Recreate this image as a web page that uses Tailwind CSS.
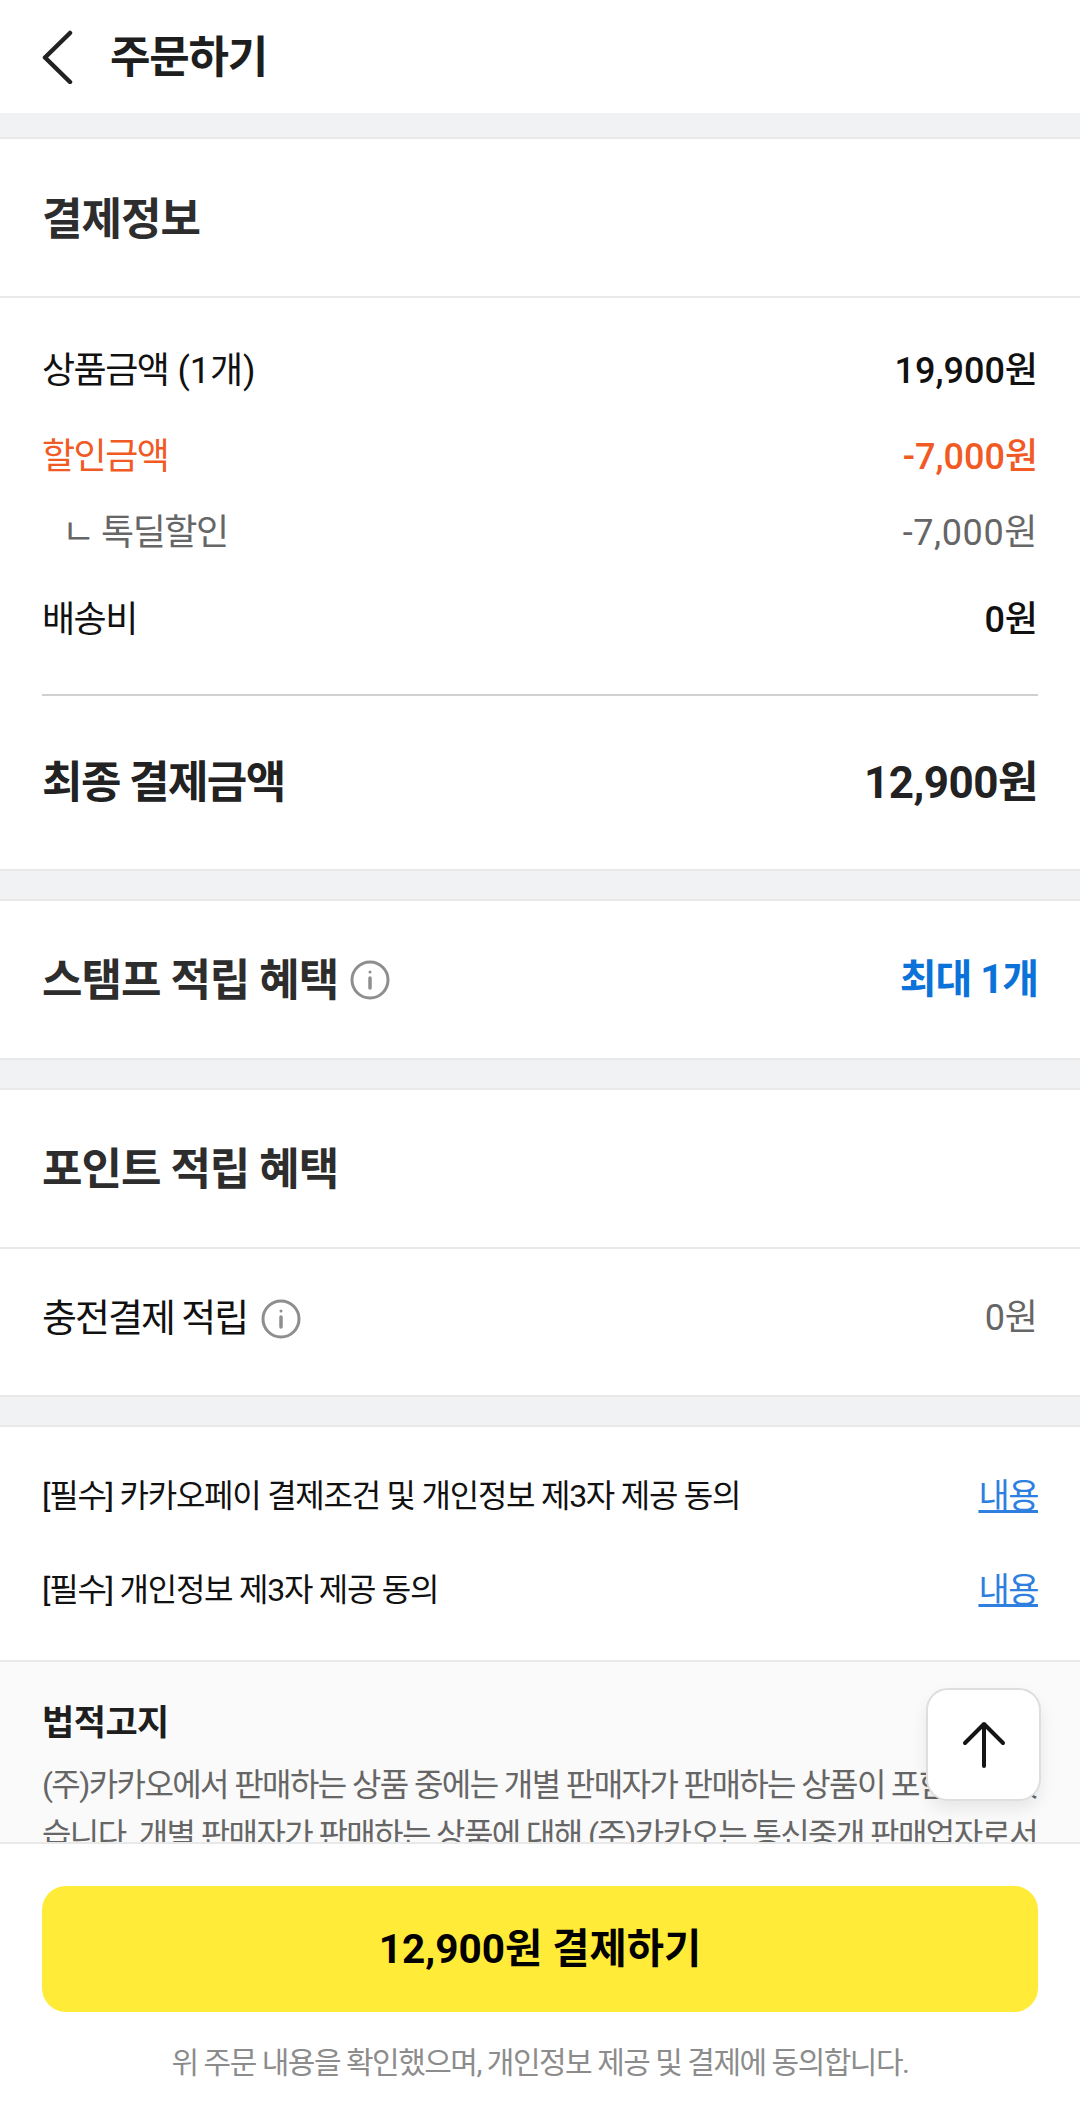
<!DOCTYPE html>
<html lang="ko">
<head>
  <meta charset="UTF-8" />
  <meta name="viewport" content="width=device-width, initial-scale=1.0"/>
  <title>주문하기</title>
  <script src="https://cdn.jsdelivr.net/npm/@tailwindcss/browser@4"></script>
</head>
<body class="font-['Roboto','Noto_Sans_CJK_KR',sans-serif] bg-white text-[#111]">
  <div class="relative flex flex-col h-[2117px] w-[1080px] overflow-hidden">

    <!-- Header -->
    <header class="flex items-center h-[113px] pl-[42px] shrink-0">
      <svg class="w-[32px] h-[54px]" viewBox="0 0 32 54" fill="none" stroke="#222" stroke-width="4.5" stroke-linecap="round" stroke-linejoin="round"><path d="M28 3 L3 27.5 L28 52"/></svg>
      <h1 class="ml-[36px] pt-[3px] text-[44px] tracking-[-1.2px] font-bold leading-none text-[#1e1e1e]">주문하기</h1>
    </header>

    <main class="flex-1 overflow-hidden bg-[#f1f2f4] border-t border-[#f1f2f4]">
      <div class="h-[23px]"></div>

      <!-- 결제정보 -->
      <section class="bg-white border-y-2 border-[#e9e9ea]">
        <div class="flex items-center h-[159px] px-[42px] border-b-2 border-[#e9e9ea]">
          <h2 class="pt-[4px] text-[44px] tracking-[-1px] font-bold leading-none text-[#2d2d2d]">결제정보</h2>
        </div>
        <div class="px-[42px] pt-[43px] text-[36px]">
          <div class="flex justify-between items-center h-[60px]"><span><span class="tracking-[-1.5px]">상품금액</span> (1개)</span><span class="font-medium">19,900원</span></div>
          <div class="flex justify-between items-center h-[60px] mt-[26px] text-[#f15a24]"><span class="tracking-[-1.5px]">할인금액</span><span class="font-medium">-7,000원</span></div>
          <div class="flex justify-between items-center h-[60px] mt-[16px] text-[#666]"><span class="pl-[20px] tracking-[-1.5px]">ㄴ 톡딜할인</span><span class="tracking-[0.6px]">-7,000원</span></div>
          <div class="flex justify-between items-center h-[60px] mt-[27px]"><span class="tracking-[-1.5px]">배송비</span><span class="font-medium">0원</span></div>
          <div class="h-[2px] bg-[#d0d0d2] mt-[44px]"></div>
          <div class="flex justify-between items-center h-[173px] text-[44px] font-bold text-[#222]"><span class="tracking-[-1.6px]">최종 결제금액</span><span class="tracking-[-0.5px]">12,900원</span></div>
        </div>
      </section>
      <div class="h-[28px]"></div>

      <!-- 스탬프 -->
      <section class="flex justify-between items-center h-[161px] px-[42px] bg-white border-y-2 border-[#e9e9ea]">
        <div class="flex items-center gap-[12px]">
          <h2 class="pt-[2px] text-[44px] tracking-[-1px] font-bold leading-none text-[#2d2d2d]">스탬프 적립 혜택</h2>
          <svg class="w-[40px] h-[40px]" viewBox="0 0 40 40" fill="none" stroke="#8e8e8e" stroke-width="3"><circle cx="20" cy="20" r="18"/><path d="M20 18v10" stroke-linecap="round" stroke-width="3.5"/><circle cx="20" cy="12" r="1.5" fill="#8e8e8e" stroke="none"/></svg>
        </div>
        <span class="text-[40px] tracking-[-1px] font-bold text-[#0a72d8]">최대 1개</span>
      </section>
      <div class="h-[28px]"></div>

      <!-- 포인트 -->
      <section class="bg-white border-y-2 border-[#e9e9ea]">
        <div class="flex items-center h-[159px] px-[42px] border-b-2 border-[#e9e9ea]">
          <h2 class="pt-[3px] text-[44px] tracking-[-1px] font-bold leading-none text-[#2d2d2d]">포인트 적립 혜택</h2>
        </div>
        <div class="flex justify-between items-center h-[146px] pb-[8px] px-[42px] text-[36px]">
          <div class="flex items-center gap-[14px]">
            <span class="text-[38px] tracking-[-2px]">충전결제 적립</span>
            <svg class="w-[40px] h-[40px] mt-[2px]" viewBox="0 0 40 40" fill="none" stroke="#8e8e8e" stroke-width="3"><circle cx="20" cy="20" r="18"/><path d="M20 18v10" stroke-linecap="round" stroke-width="3.5"/><circle cx="20" cy="12" r="1.5" fill="#8e8e8e" stroke="none"/></svg>
          </div>
          <span class="text-[#666]">0원</span>
        </div>
      </section>
      <div class="h-[28px]"></div>

      <!-- 약관 -->
      <section class="bg-white border-t-2 border-[#e9e9ea] h-[235px] px-[42px] pt-[36px] text-[32px] tracking-[-1.25px]">
        <div class="flex justify-between items-center h-[66px]"><span>[필수] 카카오페이 결제조건 및 개인정보 제3자 제공 동의</span><a class="underline text-[34px] tracking-[-1.5px] text-[#2f7fe0]">내용</a></div>
        <div class="flex justify-between items-center h-[66px] mt-[28px]"><span>[필수] 개인정보 제3자 제공 동의</span><a class="underline text-[34px] tracking-[-1.5px] text-[#2f7fe0]">내용</a></div>
      </section>

      <!-- 법적고지 -->
      <section class="bg-[#fafafa] border-t-2 border-[#e9e9ea] px-[42px] pt-[38px]">
        <h3 class="text-[35px] tracking-[-0.5px] font-bold leading-[48px] text-[#1e1e1e]">법적고지</h3>
        <p class="mt-[12px] text-[32px] leading-[50px] tracking-[-1.6px] text-[#666]">(주)카카오에서 판매하는 상품 중에는 개별 판매자가 판매하는 상품이 포함되어 있습니다. 개별 판매자가 판매하는 상품에 대해 (주)카카오는 통신중개 판매업자로서</p>
      </section>
    </main>

    <!-- Footer -->
    <footer class="shrink-0 h-[275px] bg-white border-t-2 border-[#e9e9ea] px-[42px] pt-[42px]">
      <button class="w-full h-[126px] rounded-[24px] bg-[#ffeb38] text-[40.5px] font-bold text-black">12,900원 결제하기</button>
      <p class="mt-[28px] text-center text-[30px] tracking-[-1.5px] text-[#8c8c8c]">위 주문 내용을 확인했으며, 개인정보 제공 및 결제에 동의합니다.</p>
    </footer>

    <!-- Scroll top -->
    <button class="absolute left-[926px] top-[1688px] w-[115px] h-[113px] flex items-center justify-center bg-white rounded-[22px] border-2 border-[#dedede] shadow-[0_8px_16px_rgba(0,0,0,0.08)]">
      <svg class="w-[44px] h-[48px]" viewBox="0 0 44 48" fill="none" stroke="#151515" stroke-width="4" stroke-linecap="round" stroke-linejoin="round"><path d="M22 3v42M3 22 L22 3 L41 22"/></svg>
    </button>
  </div>
</body>
</html>
